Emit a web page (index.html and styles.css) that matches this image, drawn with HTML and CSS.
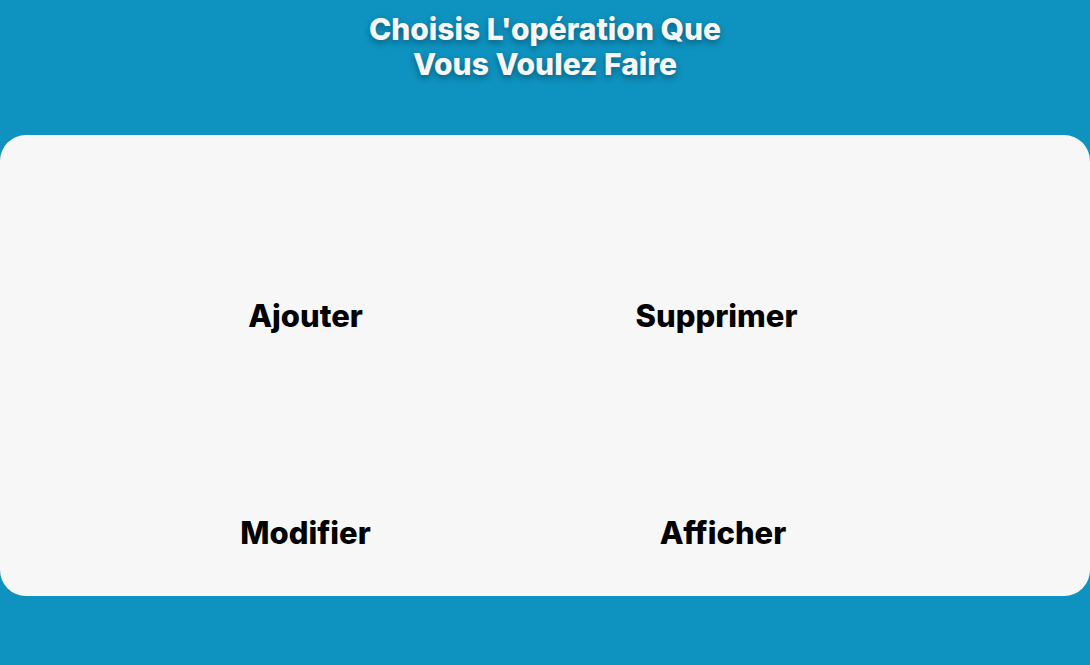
FILE: index.html
```html
<!DOCTYPE html>
<html lang="fr">
<head>
<meta charset="utf-8">
<title>Opérations</title>
<link rel="stylesheet" href="styles.css">
</head>
<body>
<header class="header">
  <h1 class="title">Choisis L'opération Que Vous Voulez Faire</h1>
</header>
<main class="panel">
  <div class="grid">
    <a class="op" href="#">Ajouter</a>
    <a class="op" href="#">Supprimer</a>
    <a class="op" href="#">Modifier</a>
    <a class="op op-shift" href="#">Afficher</a>
  </div>
</main>
</body>
</html>
```

FILE: styles.css
```css
* { box-sizing: border-box; }
html, body { margin: 0; padding: 0; }
body {
  background: #0e92bf;
  font-family: Inter, "Noto Sans", sans-serif;
  height: 665px;
  overflow: hidden;
}
.header {
  padding-top: 12px;
  height: 135px;
}
.title {
  margin: 0 auto;
  max-width: 400px;
  text-align: center;
  color: #f7f7f7;
  font-size: 30px;
  font-weight: 800;
  line-height: 35px;
  text-shadow: 0 3px 6px rgba(0, 0, 0, 0.35);
}
.panel {
  background: #f7f7f7;
  border-radius: 26px;
  height: 461px;
  padding-top: 163px;
}
.grid {
  display: grid;
  grid-template-columns: 415px 407px;
  padding-left: 98px;
  row-gap: 182px;
}
.op {
  display: block;
  text-align: center;
  color: #000;
  text-decoration: none;
  font-size: 31px;
  font-weight: 800;
  line-height: 35px;
}
.op-shift { padding-left: 13px; }
```
